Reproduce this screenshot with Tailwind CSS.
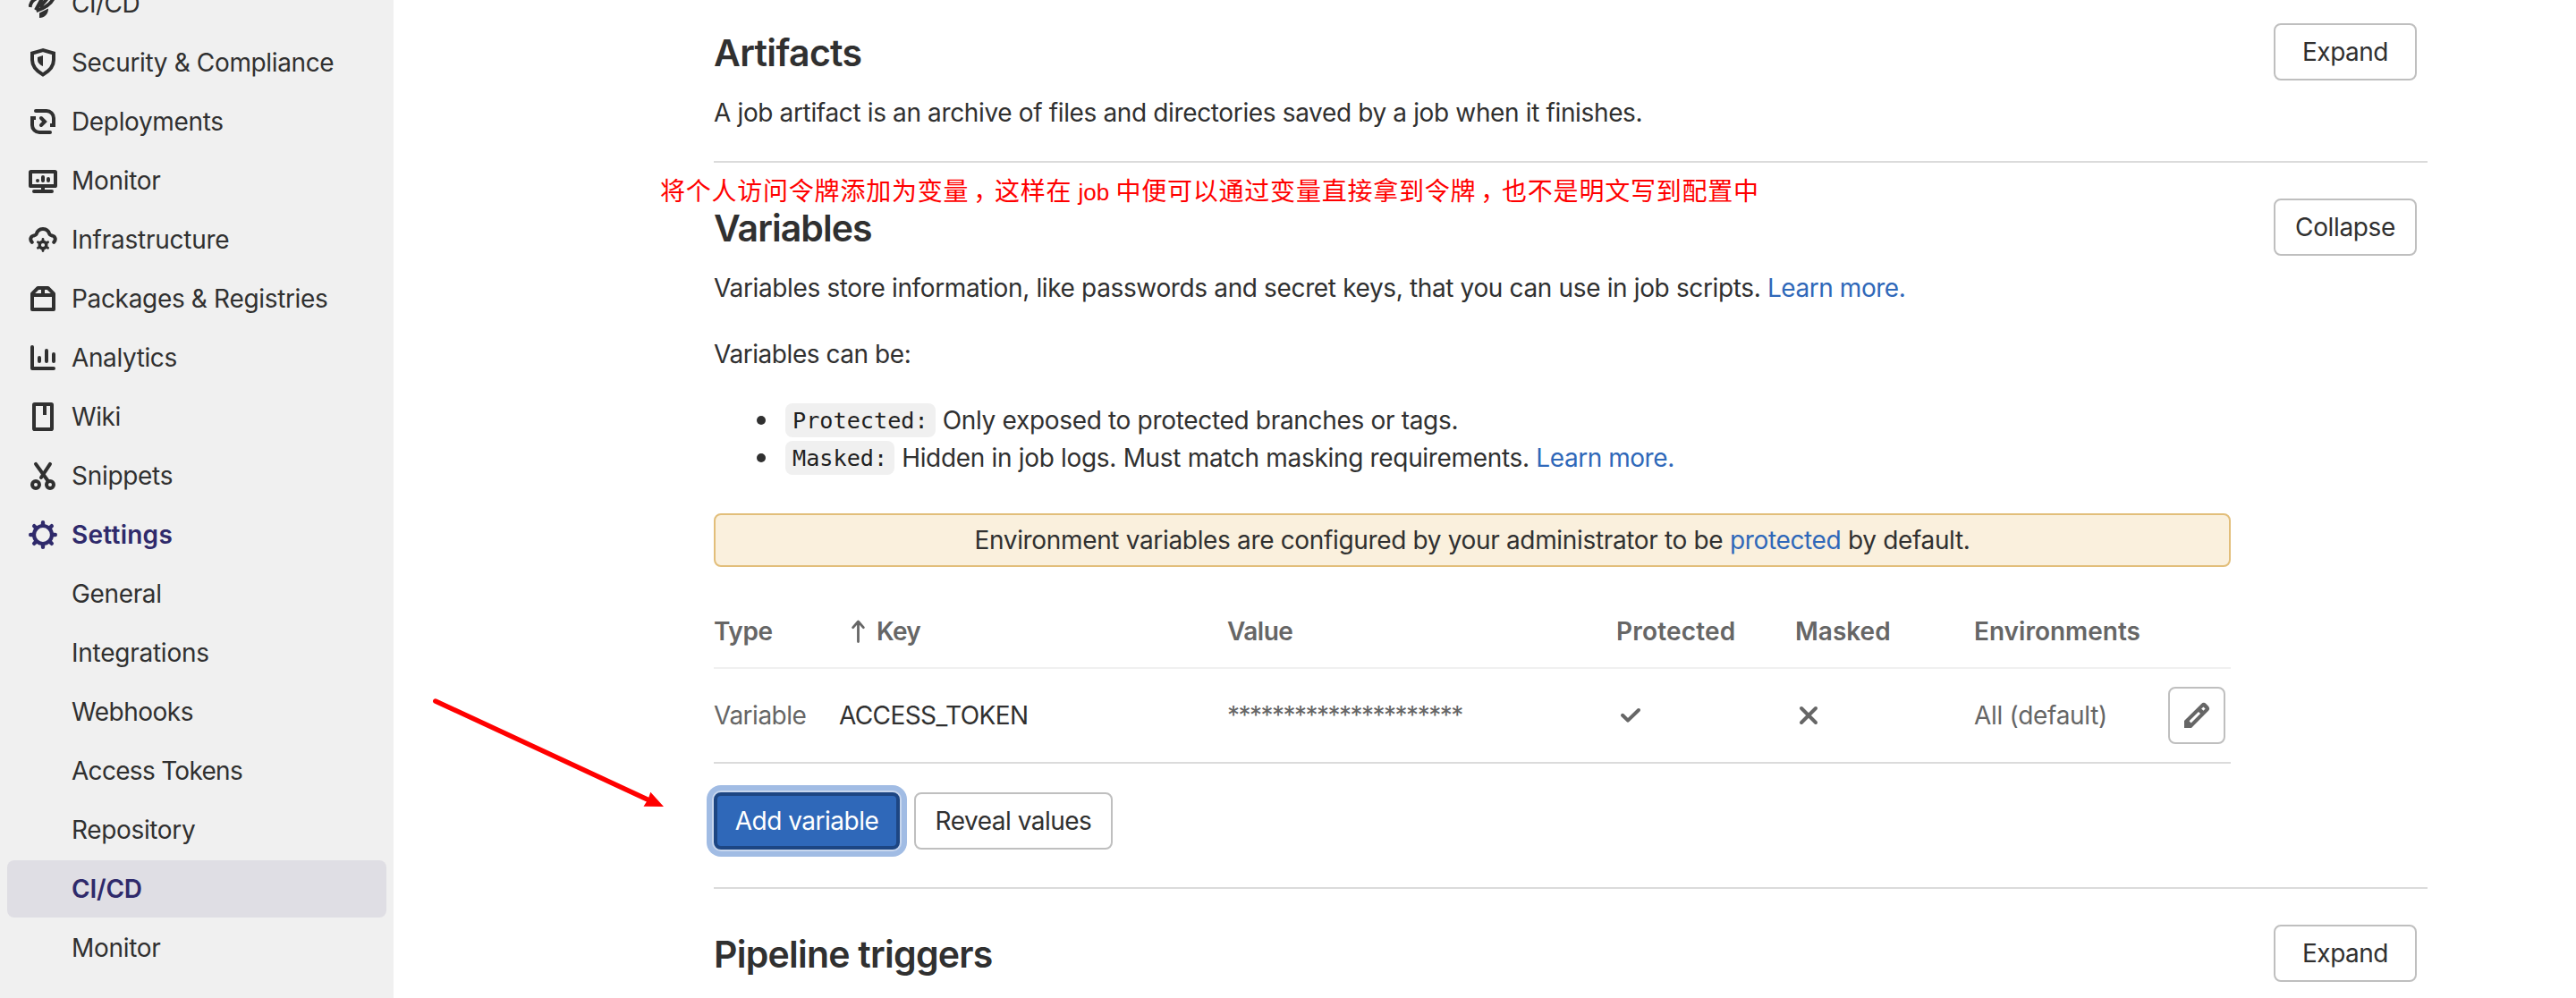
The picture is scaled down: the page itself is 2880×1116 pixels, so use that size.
<!DOCTYPE html>
<html lang="en">
<head>
<meta charset="utf-8">
<title>CI/CD Settings</title>
<script src="https://cdn.jsdelivr.net/npm/@tailwindcss/browser@4"></script>
</head>
<body class="relative flex h-[1116px] w-[2880px] overflow-hidden bg-white font-['Inter',sans-serif] text-[28px] leading-[42px] tracking-[-0.36px] text-[#303030]">

<aside class="h-[1116px] w-[440px] shrink-0 overflow-hidden bg-[#f0f0f0]">
  <nav class="-mt-[28px] flex flex-col gap-[2px] px-2">
    <a class="flex h-16 items-center gap-4 pl-6">
      <svg class="size-8" viewBox="0 0 16 16" fill="none" stroke="currentColor" stroke-width="2"><path d="M.8 10C1 7.600 2.300 6 4.500 5M4 11.600 7.600 5M4.300 12C9 10.500 12.300 8.500 13.800 5.200M6.300 10 10.200 5.500"/><path d="M6 13.200 11 10.800C11 14 9 16 6 16z" fill="currentColor" stroke="none"/></svg>
      <span class="tracking-[-0.5px]">CI/CD</span></a>
    <a class="flex h-16 items-center gap-4 pl-6">
      <svg class="size-8" viewBox="0 0 16 16" fill="none" stroke="currentColor" stroke-width="2"><path d="M8 1.050 2 2.800V6.500C2 10 4.500 12.800 8 14.700 11.500 12.800 14 10 14 6.500V2.800z"/><path d="M8 4 5 5v1.500C5 8 6.300 9.300 8 10z" fill="currentColor" stroke="none"/></svg>
      <span>Security &amp; Compliance</span></a>
    <a class="flex h-16 items-center gap-4 pl-6">
      <svg class="size-8" viewBox="0 0 16 16" fill="none" stroke="currentColor" stroke-width="2"><path d="M4 2h6a4 4 0 0 1 4 4v4h-2M12 14H6a4 4 0 0 1-4-4V6h2"/><circle cx="4" cy="2" r="1" fill="currentColor" stroke="none"/><circle cx="12" cy="14" r="1" fill="currentColor" stroke="none"/><path d="M7 6l2 2-2 2" stroke-linecap="round"/></svg>
      <span class="tracking-[-0.35px]">Deployments</span></a>
    <a class="flex h-16 items-center gap-4 pl-6">
      <svg class="size-8" viewBox="0 0 16 16" fill="none" stroke="currentColor" stroke-width="2"><rect x="1" y="3" width="14" height="8" rx=".3"/><path d="M8 11v3"/><path d="M3 14h10M8 6v2M11 7v1M5 8h.01" stroke-linecap="round"/></svg>
      <span class="tracking-[-0.3px]">Monitor</span></a>
    <a class="flex h-16 items-center gap-4 pl-6">
      <svg class="size-8" viewBox="0 0 16 16" fill="none" stroke="currentColor" stroke-width="2" stroke-linecap="round"><path d="M1.900 9.400C.6 8 .9 6.200 3 5.700c.8-.1 1.200-.5 1.400-1C5 2.900 6.300 2 8 2s3 .9 3.600 2.700c.2.500.6.900 1.400 1 2.100.5 2.400 2.300 1.100 3.700"/><circle cx="8" cy="11" r="1.900" stroke-width="1.700"/><path d="M8 7.700v.8M8 13.500v.8M5.200 9.400l.6.300M10.200 12.300l.6.300M10.800 9.400l-.6.300M5.800 12.300l-.6.300" stroke-width="1.400"/></svg>
      <span class="tracking-[-0.25px]">Infrastructure</span></a>
    <a class="flex h-16 items-center gap-4 pl-6">
      <svg class="size-8" viewBox="0 0 16 16" fill="none" stroke="currentColor" stroke-width="2" stroke-linejoin="round"><path d="M2 6h12v8H2zM2 6v-.8L5.200 2h5.600L14 5.200V6M8 2v4"/></svg>
      <span class="tracking-[-0.33px]">Packages &amp; Registries</span></a>
    <a class="flex h-16 items-center gap-4 pl-6">
      <svg class="size-8" viewBox="0 0 16 16" fill="none" stroke="currentColor" stroke-width="2" stroke-linecap="round" stroke-linejoin="round"><path d="M2 2v12h12M6 8v2M10 4v6M14 6v4"/></svg>
      <span class="tracking-[-0.4px]">Analytics</span></a>
    <a class="flex h-16 items-center gap-4 pl-6">
      <svg class="size-8" viewBox="0 0 16 16" fill="none" stroke="currentColor" stroke-width="2"><rect x="3" y="1" width="10" height="14" rx=".4"/><path d="M9 1v6"/></svg>
      <span class="tracking-[-0.4px]">Wiki</span></a>
    <a class="flex h-16 items-center gap-4 pl-6">
      <svg class="size-8" viewBox="0 0 16 16" fill="none" stroke="currentColor" stroke-width="2" stroke-linecap="round"><circle cx="4" cy="13" r="2"/><circle cx="12" cy="13" r="2"/><path d="M12 1.400 7 9M4 1.400 10.900 11"/></svg>
      <span class="tracking-[-0.3px]">Snippets</span></a>
    <a class="flex h-16 items-center gap-4 pl-6 text-[#2f2a6b]">
      <svg class="size-8" viewBox="0 0 16 16" fill="none" stroke="currentColor" stroke-linecap="round"><circle cx="8" cy="8" r="5" stroke-width="2.100"/><path d="M8 1.100v1.200M8 13.700v1.200M1.100 8h1.200M13.700 8h1.200M3.100 3.100l.9.900M12 12l.9.900M12.900 3.100l-.9.900M4 12l-.9.900" stroke-width="2.200"/></svg>
      <span class="font-semibold tracking-[0.25px]">Settings</span></a>
    <a class="flex h-16 items-center pl-[72px]">General</a>
    <a class="flex h-16 items-center pl-[72px] tracking-[-0.25px]">Integrations</a>
    <a class="flex h-16 items-center pl-[72px] tracking-[-0.5px]">Webhooks</a>
    <a class="flex h-16 items-center pl-[72px] tracking-[-0.7px]">Access Tokens</a>
    <a class="flex h-16 items-center pl-[72px] tracking-[-0.35px]">Repository</a>
    <a class="flex h-16 items-center rounded-lg bg-[#dfdee4] pl-[72px] font-semibold tracking-[-0.2px] text-[#2f2a6b]">CI/CD</a>
    <a class="flex h-16 items-center pl-[72px] tracking-[-0.3px]">Monitor</a>
  </nav>
</aside>

<main class="-mt-4 ml-[358px] w-[1916px] shrink-0">
  <section class="flex h-[196px] items-start justify-between border-t-2 border-[#dbdbdb] pt-10 pr-3">
    <div class="pt-[9px]">
      <h4 class="text-[41px] leading-[48px] font-semibold tracking-[-0.65px]">Artifacts</h4>
      <p class="mt-[22px]">A job artifact is an archive of files and directories saved by a job when it finishes.</p>
    </div>
    <button class="h-16 w-40 rounded-lg border-2 border-[#bfbfbf] tracking-[-0.5px]">Expand</button>
  </section>

  <section class="h-[812px] border-t-2 border-[#dbdbdb] pt-10">
    <div class="flex h-[121px] items-start justify-between pr-3">
      <div class="pt-[9px]">
        <h4 class="text-[41px] leading-[48px] font-semibold tracking-[-0.95px]">Variables</h4>
        <p class="mt-[22px]">Variables store information, like passwords and secret keys, that you can use in job scripts. <a class="tracking-[-0.45px] text-[#2f68b9]">Learn more.</a></p>
      </div>
      <button class="h-16 w-40 rounded-lg border-2 border-[#bfbfbf]">Collapse</button>
    </div>
    <p class="mt-8 tracking-[-0.45px]">Variables can be:</p>
    <ul class="mt-8 pl-12 tracking-[-0.32px]">
      <li class="flex h-[42px] items-center"><span class="mr-[22px] size-[10px] rounded-full bg-[#303030]"></span><code class="mr-2 h-[38px] rounded-lg bg-[#f0f0f0] px-2 font-['DejaVu_Sans_Mono',monospace] text-[25.2px] leading-[40px] tracking-normal text-[#1f1f1f]">Protected:</code><span>Only exposed to protected branches or tags.</span></li>
      <li class="flex h-[42px] items-center"><span class="mr-[22px] size-[10px] rounded-full bg-[#303030]"></span><code class="mr-2 h-[38px] rounded-lg bg-[#f0f0f0] px-2 font-['DejaVu_Sans_Mono',monospace] text-[25.2px] leading-[40px] tracking-normal text-[#1f1f1f]">Masked:</code><span>Hidden in job logs. Must match masking requirements. <a class="tracking-[-0.45px] text-[#2f68b9]">Learn more.</a></span></li>
    </ul>
    <div class="mt-[41px] flex h-[60px] w-[1696px] items-center justify-center rounded-lg border-2 border-[#e2be7a] bg-[#faf0dd] tracking-[-0.34px]">
      <p>Environment variables are configured by your administrator to be <a class="text-[#2f68b9]">protected</a> by default.</p>
    </div>
    <div class="mt-[30px] w-[1696px] text-[#666]">
      <div class="grid h-[84px] grid-cols-[140px_434px_434px_200px_200px_218px_70px] items-center border-b-2 border-[#f0f0f0] pt-[2px] font-semibold tracking-normal">
        <span class="tracking-[-0.4px]">Type</span>
        <span class="flex items-center pl-[14px] tracking-[-0.7px]"><svg class="mr-[13px] h-[26px] w-[15px]" viewBox="0 0 15 26" fill="none" stroke="currentColor" stroke-width="2.800" stroke-linecap="round" stroke-linejoin="round"><path d="M7.500 24.500V2.500M1.700 8.700 7.500 2l5.800 6.700"/></svg>Key</span>
        <span class="tracking-[-0.5px]">Value</span>
        <span class="pl-px tracking-[0.2px]">Protected</span>
        <span class="pl-px">Masked</span>
        <span class="pl-px">Environments</span>
      </div>
      <div class="grid h-[106px] grid-cols-[140px_434px_434px_200px_200px_218px_70px] items-center border-b-2 border-[#dbdbdb]">
        <span class="tracking-[-0.5px]">Variable</span>
        <span class="tracking-[-0.6px] text-[#303030]">ACCESS_TOKEN</span>
        <span class="tracking-[-1.52px]">*********************</span>
        <svg class="size-8" viewBox="0 0 32 32" fill="none" stroke="currentColor" stroke-width="4" stroke-linecap="round" stroke-linejoin="round"><path d="M8 15.800 14 21.600 26 10"/></svg>
        <svg class="size-8" viewBox="0 0 32 32" fill="none" stroke="currentColor" stroke-width="4" stroke-linecap="round"><path d="M8 8 24 24M24 8 8 24"/></svg>
        <span class="pl-px tracking-[-0.3px]">All (default)</span>
        <button class="flex size-16 items-center justify-center rounded-lg border-2 border-[#bfbfbf]">
          <svg class="size-8" viewBox="0 0 16 16"><path fill="#666" d="M1 15v-4L10.500 1.600a2 2 0 0 1 2.800 0l1.100 1.100a2 2 0 0 1 0 2.800L5 15z"/><path d="M4.300 11.700 9.500 6.500" stroke="#fff" stroke-width="1.500"/><path d="M10.600 4.300 11.700 3.200l1.100 1.100-1.100 1.100z" fill="#fff"/></svg>
        </button>
      </div>
    </div>
    <div class="mt-8 flex gap-4">
      <button class="h-16 w-[208px] rounded-lg border-4 border-[#1d4683] bg-[#2f68b9] tracking-[-0.5px] text-white shadow-[0_0_0_2px_#c8d7ee,0_0_0_8px_#a1bce4]">Add variable</button>
      <button class="h-16 w-[222px] rounded-lg border-2 border-[#bfbfbf] tracking-[-0.5px]">Reveal values</button>
    </div>
  </section>

  <section class="flex items-start justify-between border-t-2 border-[#dbdbdb] pt-10 pr-3">
    <h4 class="pt-[9px] text-[41px] leading-[48px] font-semibold tracking-[-0.75px]">Pipeline triggers</h4>
    <button class="h-16 w-40 rounded-lg border-2 border-[#bfbfbf] tracking-[-0.5px]">Expand</button>
  </section>
</main>

<!-- Annotations drawn over the page -->
<p lang="zh" class="absolute top-[192px] left-[738px] font-['Noto_Sans_CJK_SC',sans-serif] text-[28px] leading-[40px] tracking-[0.77px] whitespace-pre text-[#ff0000]">将个人访问令牌添加为变量<span class="relative left-[5px]">，</span>这样在<span class="font-['Liberation_Sans',sans-serif] text-[26px] tracking-normal"> job </span>中便可以通过变量直接拿到令牌<span class="relative left-[5px]">，</span>也不是明文写到配置中</p>
<svg class="absolute top-[770px] left-[470px] h-[150px] w-[290px]" viewBox="470 770 290 150"><path d="M486.800 784 726 895" stroke="#ff0000" stroke-width="5.500" stroke-linecap="round"/><path d="M742 902 727.300 885.700 724.500 894 719.500 901.800z" fill="#ff0000"/></svg>
</body>
</html>
